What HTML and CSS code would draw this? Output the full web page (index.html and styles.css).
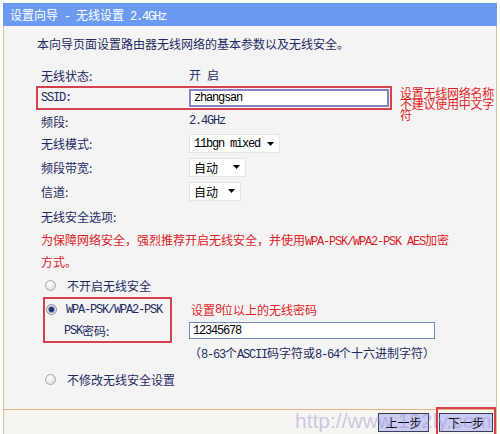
FILE: index.html
```html
<!DOCTYPE html>
<html lang="zh-CN">
<head>
  <meta charset="UTF-8">
  <title>设置向导 - 无线设置 2.4GHz</title>
  <link rel="stylesheet" href="styles.css">
</head>
<body>
  <div class="window">
    <div class="titlebar">设置向导<span class="en"> - </span>无线设置<span class="en"> 2.4GHz</span></div>

    <div class="content">
      <p class="intro">本向导页面设置路由器无线网络的基本参数以及无线安全。</p>

      <div class="form">
        <div class="row short">
          <span class="label">无线状态:</span>
          <span>开<span class="en"> </span>启</span>
        </div>

        <div class="row-note">
          <div class="row mark">
            <span class="label en">SSID:</span>
            <div class="input ssid en">zhangsan</div>
          </div>
          <div class="note">设置无线网络名称<br>不建议使用中文字<br>符</div>
        </div>

        <div class="row short">
          <span class="label">频段:</span>
          <span class="en">2.4GHz</span>
        </div>

        <div class="row">
          <span class="label">无线模式:</span>
          <div class="select sel-mode"><span class="en">11bgn mixed</span>
            <svg width="7" height="4" viewBox="0 0 7 4"><path d="M0 0h7L3.5 4z"/></svg>
          </div>
        </div>

        <div class="row tall">
          <span class="label">频段带宽:</span>
          <div class="select sel-bw"><span>自动</span>
            <svg width="7" height="4" viewBox="0 0 7 4"><path d="M0 0h7L3.5 4z"/></svg>
          </div>
        </div>

        <div class="row tall">
          <span class="label">信道:</span>
          <div class="select sel-ch"><span>自动</span>
            <svg width="7" height="4" viewBox="0 0 7 4"><path d="M0 0h7L3.5 4z"/></svg>
          </div>
        </div>

        <div class="heading">无线安全选项:</div>
        <p class="warn">为保障网络安全，强烈推荐开启无线安全，并使用<span class="en">WPA-PSK/WPA2-PSK AES</span>加密<br>方式。</p>

        <div class="opt first">
          <span class="radio"></span>
          <span>不开启无线安全</span>
        </div>

        <div class="wpa">
          <div class="wpa-box">
            <div class="opt inbox">
              <span class="radio on"></span>
              <span class="en">WPA-PSK/WPA2-PSK</span>
            </div>
            <div class="psk"><span class="en">PSK</span>密码:</div>
          </div>
          <div class="wpa-side">
            <div class="note-line">设置<span class="en">8</span>位以上的无线密码</div>
            <div class="pw-row">
              <div class="input pw en">12345678</div>
            </div>
          </div>
        </div>

        <div class="help">（<span class="en">8-63</span>个<span class="en">ASCII</span>码字符或<span class="en">8-64</span>个十六进制字符）</div>

        <div class="opt last">
          <span class="radio"></span>
          <span>不修改无线安全设置</span>
        </div>
      </div>
    </div>

    <div class="footer">
      <button class="btn prev">上一步</button>
      <button class="btn next">下一步</button>
      <div class="watermark">http://www.192ly.com</div>
    </div>
  </div>
</body>
</html>
```

FILE: styles.css
```css
body {
  margin: 0;
  padding: 3px 3px 0;
  background: #fff;
  font-family: "Noto Sans CJK SC", sans-serif;
  font-size: 12px;
  color: #1d2c63;
}

.en {
  font-family: "Liberation Mono", "Noto Sans CJK SC", monospace;
  letter-spacing: -1.2px;
}

.titlebar {
  height: 23px;
  line-height: 23px;
  padding-left: 7px;
  background: #6a9bf0;
  color: #fff;
}

.content {
  background: #f5f4f4;
  border-left: 1px solid #e2c397;
  border-right: 1px solid #e2c397;
  padding: 8px 0 18px;
}

.intro {
  margin: 0 0 11px 33px;
  line-height: 19px;
}

.form {
  padding-left: 32px;
}

.row {
  display: flex;
  align-items: center;
  height: 23px;
  padding-left: 5px;
}

.row.short {
  height: 22px;
}

.row.tall {
  height: 24px;
}

.label {
  width: 148px;
  flex-shrink: 0;
}

.row-note {
  display: flex;
  align-items: flex-start;
  height: 24px;
}

.row.mark {
  height: 20px;
  padding: 0 1px 0 3px;
  border: 2px solid #d8404c;
}

.note {
  margin: 1px 0 0 8px;
  color: #e41e26;
  line-height: 11px;
  letter-spacing: -0.25px;
  white-space: nowrap;
}

.input {
  box-sizing: border-box;
  background: #fff;
  color: #000;
  display: flex;
  align-items: center;
}

.input.ssid {
  width: 200px;
  height: 18px;
  padding-left: 3px;
  border: 2px solid #8583c4;
}

.input.pw {
  width: 246px;
  height: 17px;
  padding-left: 3px;
  border: 1px solid #6e8bb8;
}

.select {
  box-sizing: border-box;
  display: flex;
  align-items: center;
  justify-content: space-between;
  height: 19px;
  padding: 0 5px 0 4px;
  background: #fff;
  border: 1px solid #e4e4e4;
  color: #000;
}

.select svg {
  fill: #000;
}

.sel-mode {
  width: 91px;
}

.sel-bw {
  width: 57px;
}

.sel-ch {
  width: 52px;
}

.heading {
  display: flex;
  align-items: center;
  height: 27px;
  padding-left: 5px;
}

.warn {
  margin: 0;
  padding-left: 5px;
  line-height: 19px;
  color: #e01b24;
}

.opt {
  display: flex;
  align-items: center;
  gap: 11px;
  height: 24px;
  padding-left: 9px;
}

.opt.first {
  margin-top: 2px;
}

.opt.last {
  margin-top: 4px;
}

.radio {
  box-sizing: border-box;
  width: 11px;
  height: 11px;
  border-radius: 50%;
  border: 1px solid #a8a8a8;
  background: radial-gradient(circle at 40% 35%, #fff, #d6d6d6);
}

.radio.on {
  border-color: #8d8d9c;
  background: radial-gradient(circle, #23356f 0 2.2px, #7f90bd 2.8px, #e4e6ee 4px);
}

.wpa {
  display: flex;
  margin-left: 7px;
}

.wpa-box {
  width: 125px;
  border: 2px solid #d8404c;
}

.opt.inbox {
  height: 21px;
  padding-left: 1px;
  gap: 9px;
}

.psk {
  display: flex;
  align-items: center;
  height: 21px;
  padding-left: 19px;
}

.wpa-side {
  margin-left: 17px;
  padding-top: 2px;
}

.note-line {
  display: flex;
  align-items: center;
  height: 21px;
  padding-left: 2px;
  color: #e41e26;
}

.pw-row {
  display: flex;
  align-items: center;
  height: 21px;
}

.help {
  height: 20px;
  line-height: 20px;
  padding-left: 153px;
}

.footer {
  position: relative;
  display: flex;
  align-items: center;
  justify-content: flex-end;
  gap: 10px;
  height: 24px;
  padding-right: 3px;
  background: #f7f5f2;
  border: 1px solid #e2c397;
  border-top-color: #e3b57c;
}

.btn {
  position: relative;
  box-sizing: border-box;
  height: 19px;
  padding: 0;
  border: 1px solid #3c3c5a;
  background: #c9ccf2;
  font-family: "Noto Sans CJK SC", sans-serif;
  font-size: 12px;
  color: #000;
}

.btn.prev {
  width: 51px;
}

.btn.next {
  width: 54px;
}

.btn.next::after {
  content: "";
  position: absolute;
  inset: -7px -4px -7px -4px;
  border: 2px solid #d8404c;
}

.watermark {
  position: absolute;
  left: 291px;
  top: -1px;
  font-family: "Liberation Sans", sans-serif;
  font-size: 21px;
  line-height: 24px;
  color: rgba(150, 140, 205, 0.45);
  white-space: nowrap;
  pointer-events: none;
}
```
